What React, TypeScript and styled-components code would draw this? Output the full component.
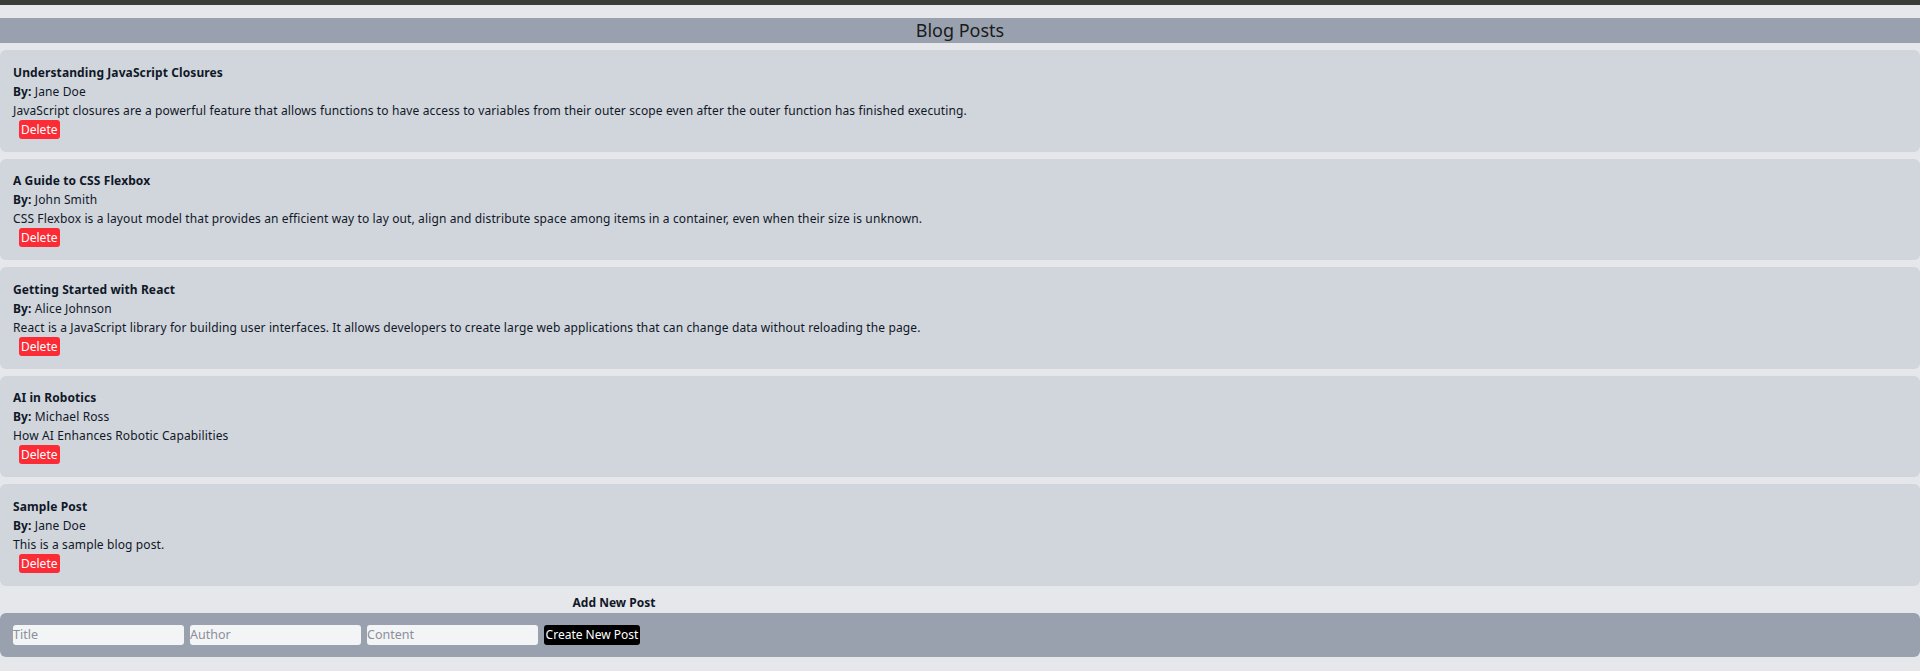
import React, { useState } from "react";
import styled, { createGlobalStyle } from "styled-components";

type Post = { id: number; title: string; author: string; content: string };

const initialPosts: Post[] = [
    { id: 1, title: "Understanding JavaScript Closures", author: "Jane Doe", content: "JavaScript closures are a powerful feature that allows functions to have access to variables from their outer scope even after the outer function has finished executing." },
    { id: 2, title: "A Guide to CSS Flexbox", author: "John Smith", content: "CSS Flexbox is a layout model that provides an efficient way to lay out, align and distribute space among items in a container, even when their size is unknown." },
    { id: 3, title: "Getting Started with React", author: "Alice Johnson", content: "React is a JavaScript library for building user interfaces. It allows developers to create large web applications that can change data without reloading the page." },
    { id: 4, title: "AI in Robotics", author: "Michael Ross", content: "How AI Enhances Robotic Capabilities" },
    { id: 5, title: "Sample Post", author: "Jane Doe", content: "This is a sample blog post." },
];

const GlobalStyle = createGlobalStyle`
    html, body {
        margin: 0;
        padding: 0;
        background: #e5e7eb;
    }
    body {
        font-family: "Noto Sans", "DejaVu Sans", sans-serif;
        font-size: 12px;
        color: #101828;
    }
    * { box-sizing: border-box; }
`;

const App: React.FC = () => {
    const [posts, setPosts] = useState<Post[]>(initialPosts),
        [title, setTitle] = useState(""),
        [author, setAuthor] = useState(""),
        [content, setContent] = useState("");

    const addPost = (e: React.FormEvent) => {
        e.preventDefault();
        if(!title || !author || !content) return;
        setPosts([...posts, { id: Date.now(), title, author, content }]);
        setTitle(""); setAuthor(""); setContent("");
    };

    return (
        <>
            <GlobalStyle />
            <TopStrip />
            <Page>
                <Header>Blog Posts</Header>
                <List>
                    {posts.map(post => (
                        <Card key={post.id}>
                            <Title>{post.title}</Title>
                            <Line><b>By:</b> {post.author}</Line>
                            <Line>{post.content}</Line>
                            <DeleteButton onClick={() => setPosts(posts.filter(p => p.id !== post.id))}>Delete</DeleteButton>
                        </Card>
                    ))}
                </List>
                <FormTitle>Add New Post</FormTitle>
                <Form onSubmit={addPost}>
                    <Input placeholder="Title" value={title} onChange={e => setTitle(e.target.value)} />
                    <Input placeholder="Author" value={author} onChange={e => setAuthor(e.target.value)} />
                    <Input placeholder="Content" value={content} onChange={e => setContent(e.target.value)} />
                    <SubmitButton type="submit">Create New Post</SubmitButton>
                </Form>
            </Page>
        </>
    );
};

export default App;

const TopStrip = styled.div`
    height: 5px;
    background: #3a3c36;
`;

const Page = styled.main`
    padding-top: 13px;
    min-height: 666px;
`;

const Header = styled.h2`
    margin: 0;
    height: 25px;
    line-height: 25px;
    background: #99a1af;
    text-align: center;
    font-size: 18px;
    font-weight: 400;
    color: #1a1a1a;
`;

const List = styled.section`
    display: flex;
    flex-direction: column;
    gap: 7px;
    margin-top: 7px;
`;

const Card = styled.article`
    background: #d1d5dc;
    border-radius: 6px;
    padding: 12.5px 13px 13px;
    line-height: 19px;
`;

const Title = styled.h3`
    margin: 0;
    font-size: 12px;
    font-weight: 700;
    line-height: 19px;
    letter-spacing: 0.1px;
`;

const Line = styled.p`
    margin: 0;
    letter-spacing: 0.12px;
    b { font-weight: 700; }
`;

const DeleteButton = styled.button`
    display: block;
    margin-left: 6px;
    height: 19px;
    padding: 0 2px;
    border: none;
    border-radius: 3px;
    background: #fb2c36;
    color: #fff;
    font: inherit;
    line-height: 19px;
    cursor: pointer;
`;

const FormTitle = styled.h3`
    width: 1228px;
    margin: 7px 0 0;
    text-align: center;
    font-size: 12px;
    font-weight: 700;
    line-height: 19px;
`;

const Form = styled.form`
    display: flex;
    gap: 6px;
    align-items: center;
    margin-top: 1px;
    padding: 12px 13px 12px;
    background: #99a1af;
    border-radius: 6px;
`;

const Input = styled.input`
    width: 171px;
    height: 20px;
    padding: 0;
    border: none;
    border-radius: 3px;
    background: #f3f4f6;
    font: inherit;
    font-size: 12.5px;
    color: #101828;
    outline: none;
    &::placeholder { color: #8b8f98; }
`;

const SubmitButton = styled.button`
    height: 20px;
    width: 96px;
    padding: 0;
    border: none;
    border-radius: 3px;
    background: #000;
    color: #fff;
    font: inherit;
    white-space: nowrap;
    cursor: pointer;
`;
